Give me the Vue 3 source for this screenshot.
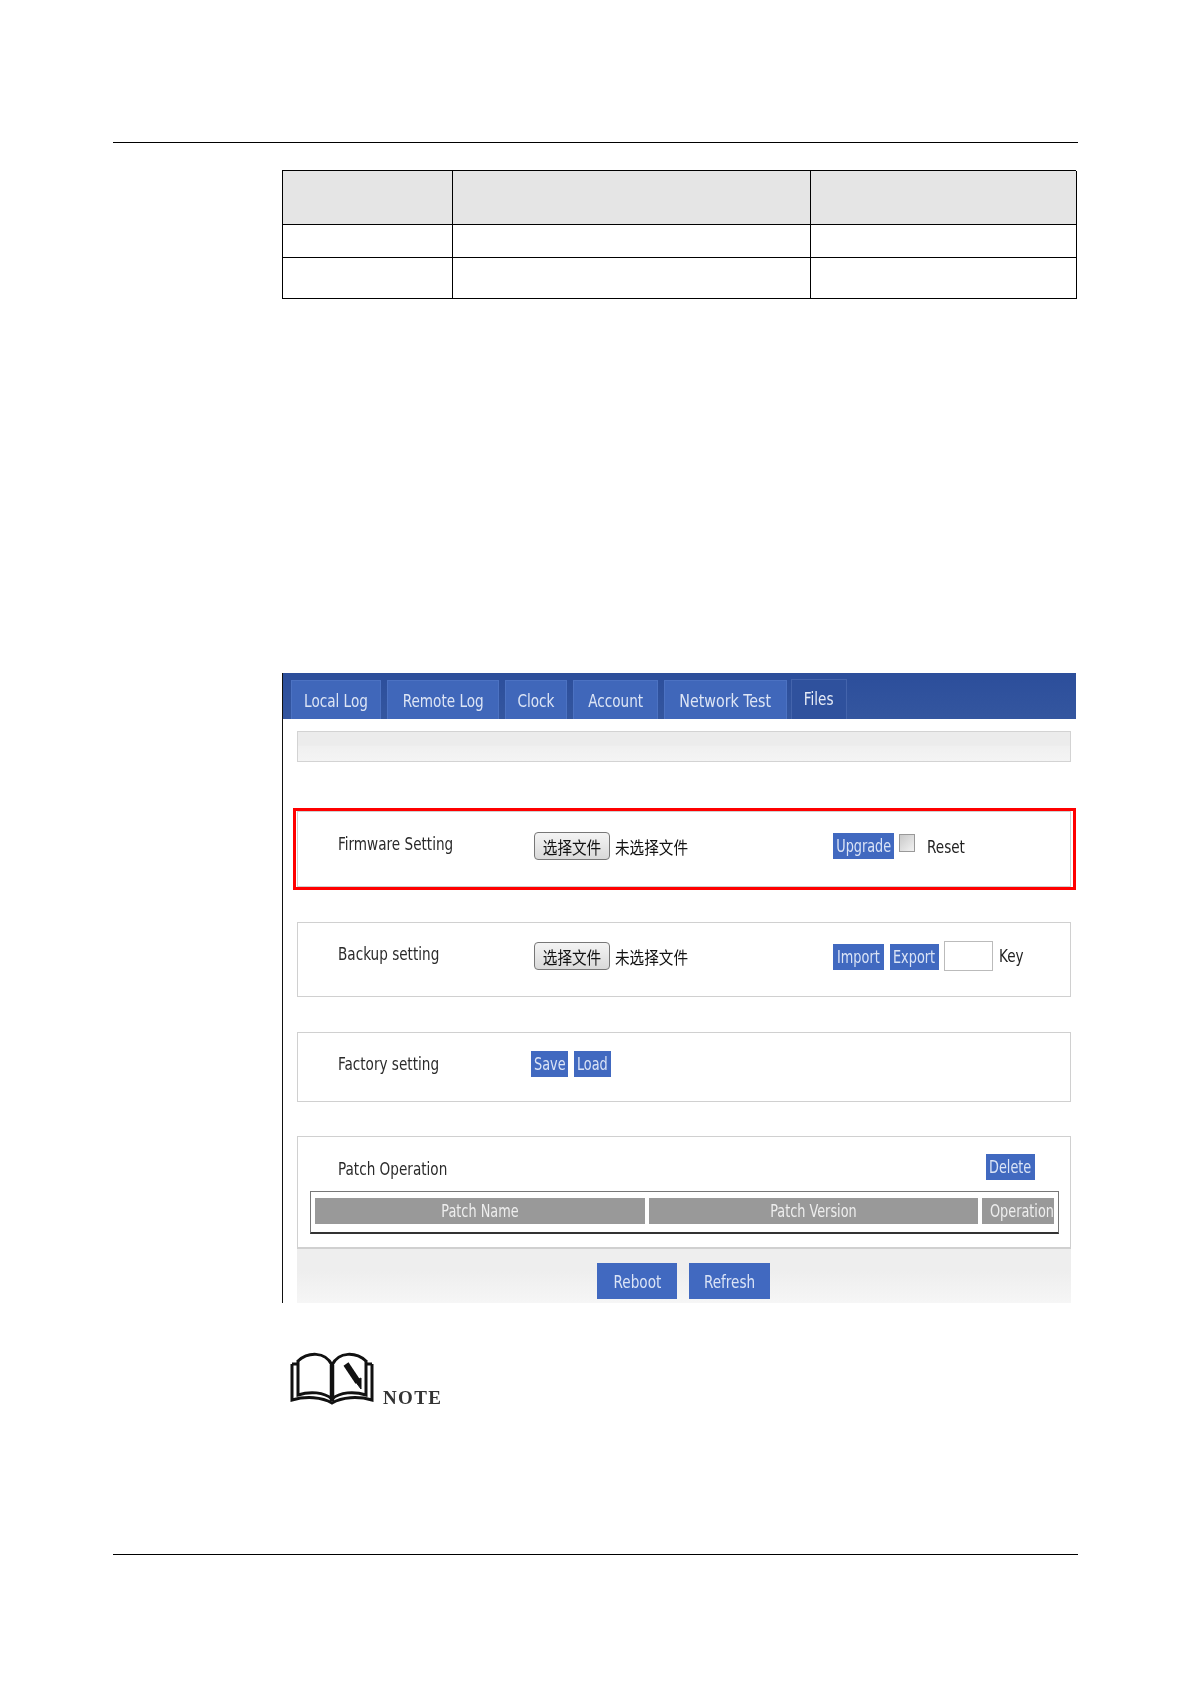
<script setup>
const tabs = ['Local Log', 'Remote Log', 'Clock', 'Account', 'Network Test']
</script>

<template>
  <div class="page">
    <div class="rule"></div>
    <div class="doc-table">
      <div class="cell head"></div><div class="cell head"></div><div class="cell head last"></div>
      <div class="cell r2"></div><div class="cell r2"></div><div class="cell r2 last"></div>
      <div class="cell r3"></div><div class="cell r3"></div><div class="cell r3 last"></div>
    </div>

    <div class="shot">
      <div class="tabbar">
        <div v-for="t in tabs" :key="t" class="tab" :class="'tab-' + t.split(' ')[0].toLowerCase()"><span class="nar">{{ t }}</span></div>
        <div class="tab tab-files"><span class="nar">Files</span></div>
      </div>
      <div class="body">
        <div class="bar"></div>

        <section class="panel firmware">
          <div class="redbox"></div>
          <span class="label nar">Firmware Setting</span>
          <div class="file"><button class="pick"><span class="cjk">选择文件</span></button><span class="none cjk">未选择文件</span></div>
          <div class="acts">
            <span class="btn b-upgrade"><span class="nar">Upgrade</span></span>
            <input class="check" type="checkbox" />
            <span class="txt reset nar">Reset</span>
          </div>
        </section>

        <section class="panel backup">
          <span class="label nar">Backup setting</span>
          <div class="file"><button class="pick"><span class="cjk">选择文件</span></button><span class="none cjk">未选择文件</span></div>
          <div class="acts">
            <span class="btn b-import"><span class="nar">Import</span></span>
            <span class="btn b-export"><span class="nar">Export</span></span>
            <input class="key" type="text" />
            <span class="txt keytxt nar">Key</span>
          </div>
        </section>

        <section class="panel factory">
          <span class="label nar">Factory setting</span>
          <div class="fbtns">
            <span class="btn b-save"><span class="nar">Save</span></span>
            <span class="btn b-load"><span class="nar">Load</span></span>
          </div>
        </section>

        <section class="panel patch">
          <div class="patch-top">
            <span class="label nar">Patch Operation</span>
            <span class="btn b-delete"><span class="nar">Delete</span></span>
          </div>
          <div class="ptable">
            <div class="th th1"><span class="nar">Patch Name</span></div>
            <div class="th th2"><span class="nar">Patch Version</span></div>
            <div class="th th3"><span class="nar">Operation</span></div>
          </div>
        </section>

        <div class="foot">
          <span class="btn big"><span class="nar">Reboot</span></span>
          <span class="btn big refresh"><span class="nar">Refresh</span></span>
        </div>
      </div>
    </div>

    <div class="note">
      <svg class="book" viewBox="0 0 84 54" width="84" height="54" fill="none" stroke="#111" stroke-width="3">
        <path d="M8 10C18 1 35 0 42 14C49 0 66 1 76 10" />
        <path d="M8 9V44C20 40 34 41 42 48C50 41 64 40 76 44V9" />
        <path d="M2 13V49C16 45 32 46 42 52C52 46 68 45 82 49V13" stroke-width="3" />
        <path d="M2 13H8M76 13H82" />
        <path d="M42 14V50" stroke-width="4.5" />
        <path d="M56 13L68 31" stroke-width="6" />
        <path d="M65 30L71 38L71 27Z" fill="#111" stroke-width="1" />
      </svg>
      <span class="note-txt">NOTE</span>
    </div>

    <div class="rule bottom"></div>
  </div>
</template>

<style scoped>
.page {
  width: 1188px;
  height: 1681px;
  background: #fff;
  padding-top: 142px;
  box-sizing: border-box;
  overflow: hidden;
  font-family: "DejaVu Sans Condensed", "DejaVu Sans", sans-serif;
}
.rule {
  width: 965px;
  height: 1px;
  margin-left: 113px;
  background: #000;
}
.rule.bottom { margin-top: 149px; }

.doc-table {
  width: 794px;
  margin: 27px 0 0 282px;
  display: grid;
  grid-template-columns: 170px 358px 266px;
  grid-template-rows: 54px 33px 41px;
  border: solid #000;
  border-width: 1px 0 0 1px;
  box-sizing: border-box;
}
.cell { border: solid #000; border-width: 0 1px 1px 0; }
.cell.head { background: #e5e5e5; }

.shot {
  width: 794px;
  height: 630px;
  margin: 374px 0 0 282px;
  border-left: 1px solid #111;
  box-sizing: border-box;
  overflow: hidden;
  filter: blur(.4px);
}
.nar {
  display: inline-block;
  transform: scaleX(.84);
  white-space: nowrap;
}
.cjk {
  display: inline-block;
  font: 17px "Noto Sans CJK SC", sans-serif;
  transform: scaleX(.86);
  white-space: nowrap;
}
.tabbar {
  height: 46px;
  display: flex;
  align-items: flex-end;
  padding-left: 8px;
  gap: 6px;
  background: linear-gradient(#2c4e9b, #34569f);
}
.tab {
  height: 39px;
  box-sizing: border-box;
  display: flex;
  align-items: center;
  justify-content: center;
  font-size: 18px;
  color: #dde5f5;
  background: #4067ba;
  border: 1px solid #4c72c2;
  border-bottom: 0;
}
.tab-local { width: 90px; }
.tab-remote { width: 112px; }
.tab-clock { width: 62px; }
.tab-account { width: 85px; }
.tab-network { width: 123px; }
.tab-network .nar { transform: scaleX(.88); }
.tab-files {
  width: 56px;
  height: 40px;
  margin-left: -2px;
  padding-bottom: 3px;
  background: #2f519d;
  border-color: #4464ac;
  color: #e6ebf6;
}

.body { padding-left: 14px; width: 774px; }
.bar {
  height: 31px;
  margin-top: 12px;
  box-sizing: border-box;
  border: 1px solid #d3d3d3;
  background: linear-gradient(#ececec 0 45%, #f0f0f0 50%, #f4f4f4);
}
.panel {
  position: relative;
  display: flex;
  box-sizing: border-box;
  border: 1px solid #d0d0d0;
  padding-left: 40px;
  color: #222;
  font-size: 18px;
}
.label { transform-origin: left center; color: #2a2a2a; }
.firmware { height: 76px; margin-top: 49px; padding-top: 20px; }
.backup { height: 75px; margin-top: 35px; padding-top: 18px; }
.factory { height: 70px; margin-top: 35px; padding-top: 18px; }
.patch {
  height: 113px;
  margin-top: 34px;
  padding: 17px 0 0;
  display: block;
  border-bottom-width: 2px;
}
.redbox {
  position: absolute;
  inset: -4px -6px -4px -5px;
  border: 3px solid #f00;
  pointer-events: none;
}
.firmware > .label { width: 196px; margin-top: 1px; }
.backup > .label { width: 196px; margin-top: 2px; }
.factory > .label { width: 196px; margin-top: 2px; }

.file {
  width: 299px;
  display: flex;
  align-items: center;
  height: 28px;
}
.pick {
  width: 76px;
  height: 28px;
  padding: 0;
  box-sizing: border-box;
  border: 1px solid #777;
  border-radius: 4px;
  background: linear-gradient(#f4f4f4, #d9d9d9);
  color: #111;
  overflow: hidden;
}
.none { margin-left: -1px; color: #111; }
.firmware .file { margin-top: 0; }
.backup .file { margin-top: 1px; }

.acts { display: flex; align-items: flex-start; }
.btn {
  display: inline-flex;
  align-items: center;
  justify-content: center;
  box-sizing: border-box;
  height: 26px;
  background: #4169c0;
  color: #dbe4f6;
  font-size: 17px;
  overflow: hidden;
}
.firmware .acts { margin-top: 1px; }
.b-upgrade { width: 61px; }
.check {
  appearance: none;
  margin: 1px 0 0 5px;
  width: 16px;
  height: 18px;
  box-sizing: border-box;
  border: 1px solid #999;
  background: linear-gradient(135deg, #c9c9c9, #f2f2f2);
}
.reset { margin: 3px 0 0 12px; transform-origin: left center; }
.backup .acts { margin-top: 3px; }
.b-import { width: 51px; }
.b-export { width: 49px; margin-left: 6px; }
.key {
  width: 49px;
  height: 30px;
  margin: -3px 0 0 5px;
  box-sizing: border-box;
  border: 1px solid #bbb;
  background: #fff;
}
.keytxt { margin: 1px 0 0 6px; transform-origin: left center; }

.fbtns { display: flex; gap: 6px; margin-left: -3px; margin-top: 0; }
.b-save, .b-load { width: 37px; }

.patch-top {
  display: flex;
  justify-content: space-between;
  height: 37px;
  padding: 0 35px 0 40px;
}
.patch-top .label { margin-top: 4px; }
.b-delete { width: 49px; }
.ptable {
  margin: 0 0 0 12px;
  width: 749px;
  height: 43px;
  box-sizing: border-box;
  border: 1px solid #777;
  border-bottom: 2px solid #333;
  padding: 6px 4px 0 4px;
  display: grid;
  grid-template-columns: 330px 329px 72px;
  gap: 4px;
}
.th {
  height: 26px;
  background: #999;
  color: #eee;
  font-size: 17px;
  display: flex;
  align-items: center;
  justify-content: center;
  overflow: hidden;
}
.th3 { justify-content: flex-start; padding-left: 8px; }
.th3 .nar { transform-origin: left center; }
.foot {
  height: 54px;
  padding-top: 14px;
  box-sizing: border-box;
  display: flex;
  justify-content: center;
  gap: 12px;
  background: linear-gradient(#eeeeee 0 40%, #f0f0f0 55%, #f6f6f6);
  padding-right: 1px;
}
.big { width: 80px; height: 36px; font-size: 18px; }
.refresh { width: 81px; }

.note {
  display: flex;
  align-items: flex-end;
  margin: 48px 0 0 290px;
  height: 54px;
  filter: blur(.4px);
}
.note-txt {
  margin-left: 9px;
  font: bold 19px "Liberation Serif", serif;
  letter-spacing: 1.4px;
  color: #333;
  line-height: 14px;
}
</style>
